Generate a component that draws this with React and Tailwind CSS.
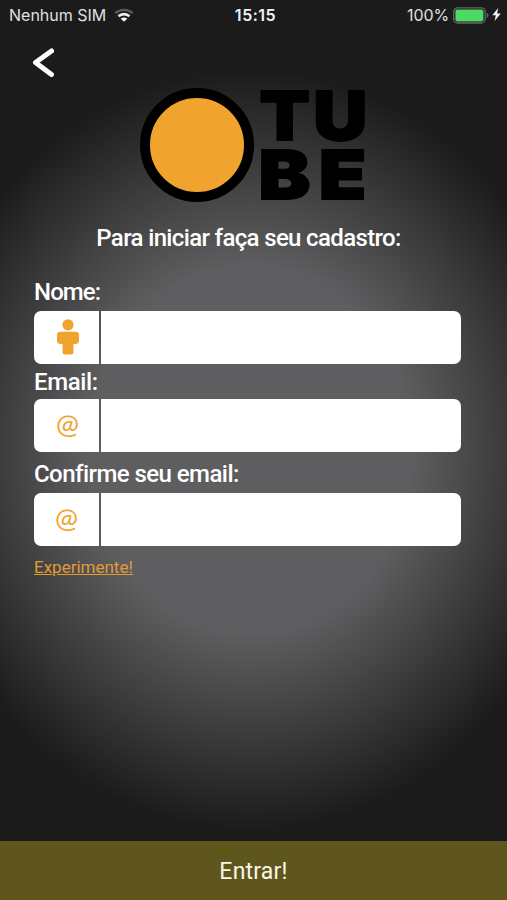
function WifiIcon() {
  return (
    <svg className="mb-px h-[14px] w-[20px]" viewBox="0 0 20 14" fill="none">
      <path d="M1.4 5.2C6.3 0.7 13.7 0.7 18.6 5.2" stroke="#5c5c5c" strokeWidth="2.4" />
      <path d="M4.5 8.3C7.7 5.4 12.3 5.4 15.5 8.3" stroke="#f2f2f2" strokeWidth="2.6" />
      <path d="M10 13.8L6.7 10.7C8.7 9 11.3 9 13.3 10.7Z" fill="#f2f2f2" />
    </svg>
  )
}

function BatteryIcon() {
  return (
    <svg className="h-[17px] w-[37px]" viewBox="0 0 37 17">
      <rect x="0.7" y="0.8" width="31.4" height="15.2" rx="4" fill="none" stroke="#686868" strokeWidth="1.3" />
      <rect x="2.4" y="2.4" width="28" height="12" rx="2.2" fill="#4cd964" />
      <path d="M33.7 5.8C36 6.6 36 10.2 33.7 11Z" fill="#686868" />
    </svg>
  )
}

function StatusBar() {
  return (
    <div className="grid h-[30px] grid-cols-3 items-center pl-[9px] pr-[6px] font-['Inter'] text-[16px] text-[#e0e0e0]">
      <div className="flex items-center gap-[8px]">
        <span className="whitespace-nowrap">Nenhum SIM</span>
        <WifiIcon />
      </div>
      <span className="ml-px text-center font-semibold tracking-[0.5px] text-[#f2f2f2]">15:15</span>
      <div className="flex items-center justify-end">
        <span className="mr-[4px] tracking-[-0.1px]">100%</span>
        <BatteryIcon />
        <svg className="mb-px ml-[2px] h-[13px] w-[9px]" viewBox="0 0 9 13" fill="#f2f2f2">
          <path d="M6.2 0L0.3 7.2H3.8L2.6 13L8.8 5.4H5.2Z" />
        </svg>
      </div>
    </div>
  )
}

function Logo() {
  return (
    <svg className="h-[116px] w-[228px] overflow-visible" viewBox="0 0 228 116">
      <circle cx="57" cy="58" r="52" fill="#f0a42e" stroke="#000" strokeWidth="10" />
      <g fontFamily="Inter" fontWeight="900" fontSize="67.5" stroke="#000" strokeWidth="1.8">
        <text transform="translate(119.6 53.2) scale(1.09 1)">T</text>
        <text transform="translate(173.2 53.2) scale(1.11 1)">U</text>
        <text transform="translate(118.6 112.4) scale(1.15 1)">B</text>
        <text transform="translate(178.8 112.4) scale(1.15 1)">E</text>
      </g>
    </svg>
  )
}

function PersonIcon() {
  return (
    <svg className="mb-[2px] ml-[2px] h-[36px] w-[22px]" viewBox="0 0 22 36" fill="#f0a42e">
      <circle cx="11" cy="5.8" r="5.6" />
      <path d="M3.5 12.7H18.5Q22 12.7 22 16V21.5Q22 25 18 25H16.5V33Q16.5 35.5 14 35.5H8Q5.5 35.5 5.5 33V25H4Q0 25 0 21.5V16Q0 12.7 3.5 12.7Z" />
    </svg>
  )
}

function AtIcon({ className }) {
  return <span className={`mb-[3px] font-['Lato'] text-[27.5px] leading-none text-[#f0a42e] ${className}`}>@</span>
}

function Field({ label, icon, type = 'text', className, labelClass }) {
  return (
    <label className={`flex flex-col ${className}`}>
      <span
        className={`whitespace-nowrap font-['Roboto'] text-[24px] font-medium leading-[28px] text-white ${labelClass}`}
      >
        {label}
      </span>
      <span className="flex h-[53px] w-[427px] gap-[2px] overflow-hidden rounded-[7px]">
        <span className="flex w-[65px] items-center justify-center bg-white">{icon}</span>
        <input type={type} className="min-w-0 flex-1 bg-white px-3 text-xl text-black outline-none" />
      </span>
    </label>
  )
}

export default function App() {
  return (
    <div className="flex h-[900px] w-[507px] flex-col overflow-hidden bg-[#1b1b1b] bg-[radial-gradient(ellipse_338px_381px_at_250px_450px,#5e5e60_0%,#5e5e60_48%,#1b1b1b_100%)]">
      <StatusBar />

      {/* Back */}
      <button className="ml-[32px] mt-[18px] h-[30px] w-[24px]">
        <svg viewBox="0 0 24 30" fill="none" stroke="#fff" strokeWidth="5" strokeLinecap="round" strokeLinejoin="round">
          <path d="M19.5 3L3.5 14.5L19.5 26.5" />
        </svg>
      </button>

      <div className="ml-[140px] mt-[9px] h-[116px]">
        <Logo />
      </div>

      <h1 className="ml-[-10px] mt-[21px] h-[28px] whitespace-nowrap text-center font-['Roboto'] text-[24px] font-medium leading-[28px] tracking-[-0.65px] text-white">
        Para iniciar faça seu cadastro:
      </h1>

      <form className="ml-[34px] flex flex-1 flex-col items-start">
        <Field label="Nome:" icon={<PersonIcon />} className="mt-[26px]" labelClass="h-[33px] tracking-[-0.9px]" />
        <Field
          label="Email:"
          type="email"
          icon={<AtIcon className="ml-[2px]" />}
          className="mt-[4px]"
          labelClass="h-[31px] tracking-[-0.4px]"
        />
        <Field
          label="Confirme seu email:"
          type="email"
          icon={<AtIcon />}
          className="mt-[8px]"
          labelClass="h-[33px] tracking-[-0.55px]"
        />
        <a href="#" className="mt-[11px] font-['Roboto'] text-[17px] leading-[20px] text-[#e29b33] underline">
          Experimente!
        </a>
      </form>

      <button className="h-[59px] bg-[#5f561d] pt-[3px] font-['Roboto'] text-[23px] tracking-[0.2px] text-[#fbf6e6]">
        Entrar!
      </button>
    </div>
  )
}
